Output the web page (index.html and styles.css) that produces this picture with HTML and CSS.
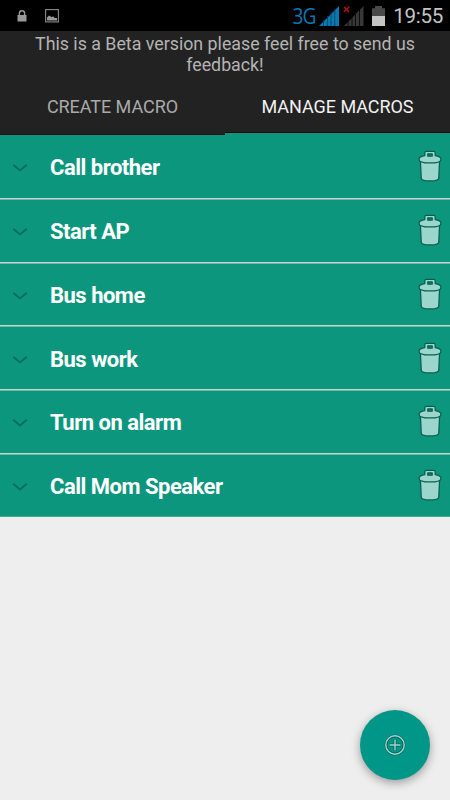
FILE: index.html
```html
<!DOCTYPE html>
<html lang="en">
<head>
    <meta charset="UTF-8">
    <meta name="viewport" content="width=device-width, initial-scale=1.0">
    <title>Manage Macros</title>
    <link rel="stylesheet" href="styles.css">
</head>
<body>
    <svg class="defs" width="0" height="0">
        <symbol id="chevron" viewBox="0 0 16 10">
            <path d="M1.2 1.7 L8 7.5 L14.8 1.7" fill="none" stroke="#087061" stroke-width="2"/>
        </symbol>
        <symbol id="trash" viewBox="0 0 24 32">
            <g fill="#9cd5cb" stroke="#07604f" stroke-width="1.3" stroke-linejoin="round">
                <path d="M2.4 11 L3.2 28 Q3.4 30.2 7.2 30.7 Q12 31.2 16.8 30.7 Q20.6 30.2 20.8 28 L21.6 11 Z"/>
                <path fill-rule="evenodd" d="M1 9.4 Q1 6.4 6.8 5.6 V2.8 Q6.8 1.4 8.2 1.4 H15.8 Q17.2 1.4 17.2 2.8 V5.6 Q23 6.4 23 9.4 Q23 12.9 12 12.9 Q1 12.9 1 9.4 Z M9.8 4 H14.2 V6.2 H9.8 Z"/>
            </g>
        </symbol>
    </svg>

    <div class="status-bar">
        <div class="notifications">
            <svg width="10" height="12" viewBox="0 0 10 12">
                <path d="M2.4 6 V3.4 a2.6 2.6 0 0 1 5.2 0 V6" fill="none" stroke="#999" stroke-width="1.4"/>
                <rect x="0.5" y="5" width="9" height="6.5" fill="#999"/>
            </svg>
            <svg width="14" height="14" viewBox="0 0 14 14">
                <rect x="0.6" y="0.6" width="12.8" height="12.3" fill="none" stroke="#8a8a8a" stroke-width="1.1"/>
                <path d="M2 11.5 V8.5 L4 6.5 L6.5 8 L8.5 7.5 L9.5 9 L12 9 V11.5 Z" fill="#999"/>
            </svg>
        </div>
        <div class="system">
            <span class="network">3G</span>
            <svg class="signal" width="20" height="20" viewBox="0 0 20 20">
                <path d="M0 20 L20 0 V20 Z" fill="#0679b1"/>
                <path d="M4.5 14 V20 M8.5 10 V20 M12 6 V20 M15.7 3 V20" stroke="#003a59" stroke-width="0.8"/>
            </svg>
            <svg class="signal-off" width="21" height="20" viewBox="0 0 21 20">
                <path d="M1 20 L20.5 0 V20 Z" fill="#383838"/>
                <path d="M5 14 V20 M9 10 V20 M12.5 6 V20 M16.5 3 V20" stroke="#080808" stroke-width="0.9"/>
                <path d="M0 0 H8 V7 H0 Z" fill="#000"/>
                <path d="M1 0.8 L6.2 6 M6.2 0.8 L1 6" stroke="#b30f0f" stroke-width="1.6"/>
            </svg>
            <svg class="battery" width="13" height="20" viewBox="0 0 13 20">
                <path d="M3 0 H10 V2.3 H13 V10 H0 V2.3 H3 Z" fill="#494949"/>
                <rect y="10" width="13" height="10" fill="#c4c4c4"/>
            </svg>
            <span class="clock">19:55</span>
        </div>
    </div>

    <div class="header">
        <p class="notice">This is a Beta version please feel free to send us<br>feedback!</p>
        <div class="tabs">
            <div class="tab">CREATE MACRO</div>
            <div class="tab active">MANAGE MACROS</div>
        </div>
    </div>

    <div class="macro-list">
        <div class="macro">
            <svg class="chevron"><use href="#chevron"/></svg>
            <span class="macro-name">Call brother</span>
            <svg class="trash"><use href="#trash"/></svg>
        </div>
        <div class="macro">
            <svg class="chevron"><use href="#chevron"/></svg>
            <span class="macro-name">Start AP</span>
            <svg class="trash"><use href="#trash"/></svg>
        </div>
        <div class="macro">
            <svg class="chevron"><use href="#chevron"/></svg>
            <span class="macro-name">Bus home</span>
            <svg class="trash"><use href="#trash"/></svg>
        </div>
        <div class="macro">
            <svg class="chevron"><use href="#chevron"/></svg>
            <span class="macro-name">Bus work</span>
            <svg class="trash"><use href="#trash"/></svg>
        </div>
        <div class="macro">
            <svg class="chevron"><use href="#chevron"/></svg>
            <span class="macro-name">Turn on alarm</span>
            <svg class="trash"><use href="#trash"/></svg>
        </div>
        <div class="macro">
            <svg class="chevron"><use href="#chevron"/></svg>
            <span class="macro-name">Call Mom Speaker</span>
            <svg class="trash"><use href="#trash"/></svg>
        </div>
    </div>

    <div class="fab">
        <svg width="22" height="22" viewBox="0 0 22 22" fill="none">
            <g stroke="#08675c" stroke-width="3">
                <circle cx="11" cy="11" r="9"/>
                <path d="M11 5 V17 M5 11 H17"/>
            </g>
            <g stroke="#9ed7d0" stroke-width="1.4">
                <circle cx="11" cy="11" r="9.2"/>
                <path d="M11 5.5 V16.5 M5.5 11 H16.5"/>
            </g>
        </svg>
    </div>
</body>
</html>
```

FILE: styles.css
```css
:root {
    --teal: #0d967e;
    --dark: #222;
    --bg-color: #eee;
}

body {
    font-family: Roboto, sans-serif;
    background-color: var(--bg-color);
    margin: 0;
    height: 800px;
    overflow: hidden;
}

svg {
    display: block;
    flex: none;
}

.defs {
    position: absolute;
}

.status-bar {
    display: flex;
    justify-content: space-between;
    height: 31px;
    background-color: #000;
}

.notifications {
    display: flex;
    align-items: center;
    gap: 18px;
    padding-left: 17px;
}

.system {
    display: flex;
    align-items: center;
    padding-right: 7px;
}

.network {
    font-family: "Open Sans", sans-serif;
    font-size: 22px;
    line-height: 29px;
    letter-spacing: -1px;
    color: #0679b1;
    margin-right: 4px;
    transform: scaleX(0.87);
    transform-origin: right;
}

.signal {
    margin-right: 4px;
}

.signal-off {
    margin-right: 8px;
}

.battery {
    margin-right: 8px;
}

.clock {
    padding-top: 2px;
    font-size: 20.6px;
    line-height: 29px;
    letter-spacing: -0.3px;
    color: #c4c4c4;
}

.header {
    height: 104px;
    background-color: var(--dark);
}

.notice {
    margin: 0;
    padding-top: 3px;
    height: 46px;
    font-size: 17.8px;
    line-height: 20.5px;
    text-align: center;
    white-space: nowrap;
    color: #b4b4b4;
}

.tabs {
    display: flex;
    height: 55px;
}

.tab {
    flex: 1;
    box-sizing: border-box;
    text-align: center;
    font-size: 18px;
    line-height: 53px;
    letter-spacing: -0.05px;
    color: #aaa;
    border-bottom: 1px solid #201012;
}

.tab.active {
    color: #f2f2f2;
    border-bottom: 2px solid var(--teal);
    box-shadow: inset 0 -1px #160406;
}

.macro-list {
    background-color: var(--teal);
}

.macro {
    display: flex;
    align-items: center;
    box-sizing: border-box;
    height: 63.75px;
    padding: 0 8px 0 12px;
    border-bottom: 1px solid #ccd2d0;
    box-shadow: 0 1px #6fb5a8;
}

.macro:last-child {
    height: 63.25px;
    border-bottom-color: #48a997;
    box-shadow: none;
}

.chevron {
    width: 16px;
    height: 10px;
    margin-top: 4px;
}

.macro-name {
    flex: 1;
    margin-left: 22px;
    padding-top: 3px;
    font-size: 22px;
    font-weight: 700;
    letter-spacing: -0.5px;
    color: #fff;
}

.trash {
    width: 24px;
    height: 32px;
}

.fab {
    position: absolute;
    right: 20px;
    bottom: 20px;
    width: 70px;
    height: 70px;
    border-radius: 50%;
    display: flex;
    align-items: center;
    justify-content: center;
    background-color: #009688;
    box-shadow: 0 3px 10px rgba(0, 0, 0, 0.35);
}
```
